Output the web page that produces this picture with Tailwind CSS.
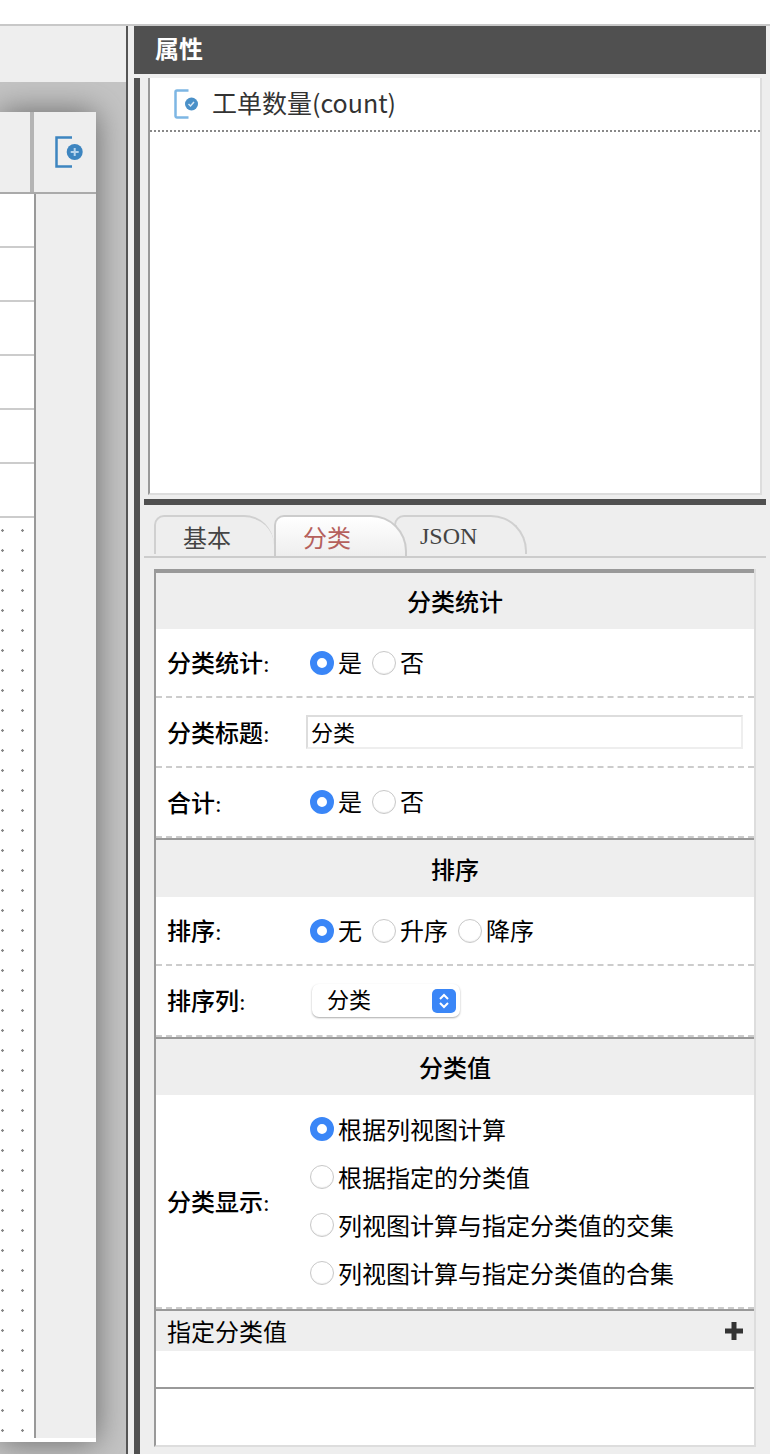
<!DOCTYPE html>
<html lang="zh">
<head>
    <meta charset="UTF-8">
    <title>属性</title>
    <script src="https://cdn.jsdelivr.net/npm/@tailwindcss/browser@4"></script>
</head>
<body class="bg-white">
<div class="w-[770px] h-[1454px] overflow-hidden font-['Liberation_Serif','Noto_Sans_CJK_SC',serif] text-black">
    <div class="h-6 bg-white"></div>
    <div class="h-[2px] bg-[#c8c8c8]"></div>
    <div class="flex h-[1428px]">
        <!-- left canvas -->
        <div class="w-[126px] shrink-0 bg-[#c4c4c4] overflow-hidden">
            <div class="h-14 bg-[#eeeeee] relative z-10"></div>
            <div class="w-24 h-[1330px] mt-[30px] bg-white shadow-[0_0_30px_#666] flex flex-col">
                <div class="flex h-20 shrink-0 bg-[#eeeeee]">
                    <div class="w-[30px]"></div>
                    <div class="w-1 bg-[#b4b4b4]"></div>
                    <div class="flex-1 flex items-center pl-5">
                        <svg width="30" height="34" viewBox="0 0 30 34" fill="none">
                            <path d="M18 2.500H2.500V31.500H18" stroke="#3d85c0" stroke-width="2.500"/>
                            <circle cx="20.700" cy="17" r="8" fill="#3d85c0"/>
                            <path d="M20.700 13v8M16.700 17h8" stroke="#b5d3ec" stroke-width="2"/>
                        </svg>
                    </div>
                </div>
                <div class="h-[2px] shrink-0 bg-[#aaaaaa]"></div>
                <div class="flex flex-1">
                    <div class="w-[34px] flex flex-col">
                        <div class="h-[54px] shrink-0 border-b-2 border-[#cccccc]"></div>
                        <div class="h-[54px] shrink-0 border-b-2 border-[#cccccc]"></div>
                        <div class="h-[54px] shrink-0 border-b-2 border-[#cccccc]"></div>
                        <div class="h-[54px] shrink-0 border-b-2 border-[#cccccc]"></div>
                        <div class="h-[54px] shrink-0 border-b-2 border-[#cccccc]"></div>
                        <div class="h-[54px] shrink-0 border-b-2 border-[#cccccc]"></div>
                        <div class="flex-1 bg-[radial-gradient(circle_at_2.5px_12.5px,#888_1px,transparent_1.5px)] bg-[size:20px_20px]"></div>
                    </div>
                    <div class="w-[2px] bg-[#999999]"></div>
                    <div class="flex-1 bg-[#eeeeee]"></div>
                </div>
                <div class="h-1 shrink-0 bg-white"></div>
            </div>
        </div>
        <div class="w-[2px] shrink-0 bg-[#555555]"></div>
        <div class="w-[6px] shrink-0 bg-[#eeeeee]"></div>
        <!-- right panel -->
        <div class="w-[636px] shrink-0 flex flex-col bg-[#eeeeee]">
            <div class="h-12 shrink-0 mr-1 bg-[#505050] pl-[21px] pb-1 flex items-center text-[24px] font-bold text-white font-['Noto_Sans_CJK_SC',sans-serif]">属性</div>
            <div class="flex flex-1 mt-1 mr-1">
                <div class="w-[6px] bg-[#505050]"></div>
                <div class="flex-1 pl-1 flex flex-col">
                    <div class="ml-1 mr-1 h-[417px] shrink-0 bg-white border-l-2 border-[#999999] border-r-2 border-r-[#dddddd] border-b-2 border-b-[#dddddd]">
                        <div class="h-[54px] border-b-2 border-dotted border-[#888888] flex items-center pl-[23px] gap-[11px] text-[25px] text-[#333333] font-['Noto_Sans_CJK_SC',sans-serif]">
                            <svg width="28" height="32" viewBox="0 0 28 32" fill="none">
                                <path d="M15.500 2.500H4a1.500 1.500 0 0 0-1.500 1.500V28a1.500 1.500 0 0 0 1.500 1.500H15.500" stroke="#7db6e4" stroke-width="2.500"/>
                                <circle cx="18.500" cy="16" r="6.500" fill="#4a90c8"/>
                                <path d="M15.500 16l2 2 3.500-4" stroke="#d8e8f5" stroke-width="1.500"/>
                            </svg>
                            <span class="pb-[2px]">工单数量(count)</span>
                        </div>
                    </div>
                    <div class="h-[6px] shrink-0 mt-1 bg-[#505050]"></div>
                    <!-- tabs -->
                    <div class="h-[53px] shrink-0 flex items-end pl-[10px] border-b-2 border-[#cccccc] text-[24px] leading-[36px]">
                        <div class="w-[120px] h-[39px] mb-[2px] pl-[27px] pt-1 text-[#444444] rounded-tl-[10px] rounded-tr-[30px] border-t-2 border-l-2 border-[#d0d0d0]">基本</div>
                        <div class="relative z-10 w-[133px] h-[41px] pl-[27px] pt-1 text-[#b5605c] rounded-tl-[10px] rounded-tr-[36px] border-t-2 border-l-2 border-r-2 border-[#cccccc] bg-gradient-to-b from-white to-[#eeeeee]">分类</div>
                        <div class="w-[133px] h-[39px] mb-[2px] -ml-[13px] pl-6 pt-[1px] text-[#444444] rounded-tl-[10px] rounded-tr-[36px] border-t-2 border-r-2 border-l-2 border-[#d0d0d0]">JSON</div>
                    </div>
                    <!-- form -->
                    <div class="mt-[11px] mx-[10px] flex-1 mb-[7px] bg-white border-l-2 border-[#999999] border-r-2 border-r-[#dddddd] border-b-2 border-b-[#dddddd] text-[24px]">
                        <div class="h-[60px] border-t-4 border-[#999999] bg-[#eeeeee] pt-1 flex items-center justify-center font-medium">分类统计</div>
                        <div class="h-[69px] flex items-center pl-[11px] border-b-2 border-dashed border-[#cccccc]">
                            <div class="w-[143px] pt-[3px] font-medium">分类统计:</div>
                            <div class="flex items-center">
                                <span class="w-6 h-6 rounded-full border-[7px] border-[#3a86f7] bg-white"></span><span class="ml-1 pt-[2px]">是</span>
                                <span class="ml-[10px] w-6 h-6 rounded-full border border-[#c8c8c8] bg-white shadow-[inset_0_-1px_1px_#eee]"></span><span class="ml-1 pt-[2px]">否</span>
                            </div>
                        </div>
                        <div class="h-[70px] flex items-center pl-[11px] border-b-2 border-dashed border-[#cccccc]">
                            <div class="w-[139px] pt-1 font-medium">分类标题:</div>
                            <div class="w-[437px] h-[34px] border-2 border-[#eeeeee] border-l-[#dddddd] border-t-[#dddddd] pl-[3px] pt-[2px] flex items-center text-[22px]">分类</div>
                        </div>
                        <div class="h-[70px] flex items-center pl-[11px] border-b-2 border-dashed border-[#cccccc]">
                            <div class="w-[143px] pt-1 font-medium">合计:</div>
                            <div class="flex items-center">
                                <span class="w-6 h-6 rounded-full border-[7px] border-[#3a86f7] bg-white"></span><span class="ml-1 pt-[2px]">是</span>
                                <span class="ml-[10px] w-6 h-6 rounded-full border border-[#c8c8c8] bg-white shadow-[inset_0_-1px_1px_#eee]"></span><span class="ml-1 pt-[2px]">否</span>
                            </div>
                        </div>
                        <div class="h-[59px] border-t-2 border-[#999999] bg-[#eeeeee] pt-1 flex items-center justify-center font-medium">排序</div>
                        <div class="h-[69px] flex items-center pl-[11px] border-b-2 border-dashed border-[#cccccc]">
                            <div class="w-[143px] pt-[2px] font-medium">排序:</div>
                            <div class="flex items-center">
                                <span class="w-6 h-6 rounded-full border-[7px] border-[#3a86f7] bg-white"></span><span class="ml-1 pt-[2px]">无</span>
                                <span class="ml-[10px] w-6 h-6 rounded-full border border-[#c8c8c8] bg-white shadow-[inset_0_-1px_1px_#eee]"></span><span class="ml-1 pt-[2px]">升序</span>
                                <span class="ml-[10px] w-6 h-6 rounded-full border border-[#c8c8c8] bg-white shadow-[inset_0_-1px_1px_#eee]"></span><span class="ml-1 pt-[2px]">降序</span>
                            </div>
                        </div>
                        <div class="h-[71px] flex items-center pl-[11px] border-b-2 border-dashed border-[#cccccc]">
                            <div class="w-[145px] pt-[2px] font-medium">排序列:</div>
                            <div class="w-[148px] h-[33px] rounded-[7px] bg-white shadow-[0_1px_2px_#aaa] pl-[15px] pr-1 flex items-center justify-between text-[22px]">
                                <span>分类</span>
                                <span class="w-6 h-6 rounded-[5px] bg-[#3a86f7] flex items-center justify-center">
                                    <svg width="12" height="18" viewBox="0 0 12 18" fill="none" stroke="white" stroke-width="2"><path d="M2 7l4-4 4 4M2 11l4 4 4-4"/></svg>
                                </span>
                            </div>
                        </div>
                        <div class="h-[58px] border-t-2 border-[#999999] bg-[#eeeeee] pt-1 flex items-center justify-center font-medium">分类值</div>
                        <div class="h-[214px] flex items-center pl-[11px] border-b-2 border-dashed border-[#cccccc]">
                            <div class="w-[143px] pt-1 font-medium">分类显示:</div>
                            <div class="flex flex-col gap-4">
                                <div class="h-8 flex items-center"><span class="w-6 h-6 rounded-full border-[7px] border-[#3a86f7] bg-white"></span><span class="ml-1 pt-[3px]">根据列视图计算</span></div>
                                <div class="h-8 flex items-center"><span class="w-6 h-6 rounded-full border border-[#c8c8c8] bg-white shadow-[inset_0_-1px_1px_#eee]"></span><span class="ml-1 pt-[3px]">根据指定的分类值</span></div>
                                <div class="h-8 flex items-center"><span class="w-6 h-6 rounded-full border border-[#c8c8c8] bg-white shadow-[inset_0_-1px_1px_#eee]"></span><span class="ml-1 pt-[3px]">列视图计算与指定分类值的交集</span></div>
                                <div class="h-8 flex items-center"><span class="w-6 h-6 rounded-full border border-[#c8c8c8] bg-white shadow-[inset_0_-1px_1px_#eee]"></span><span class="ml-1 pt-[3px]">列视图计算与指定分类值的合集</span></div>
                            </div>
                        </div>
                        <div class="h-[42px] border-t-2 border-[#999999] bg-[#eeeeee] flex items-center justify-between px-[11px]">
                            <span class="pt-1">指定分类值</span>
                            <svg width="18" height="18" viewBox="0 0 18 18" fill="none" stroke="#333333" stroke-width="5"><path d="M9 0v18M0 9h18"/></svg>
                        </div>
                        <div class="h-[38px] border-b-2 border-[#999999]"></div>
                    </div>
                </div>
            </div>
        </div>
    </div>
</div>
</body>
</html>
